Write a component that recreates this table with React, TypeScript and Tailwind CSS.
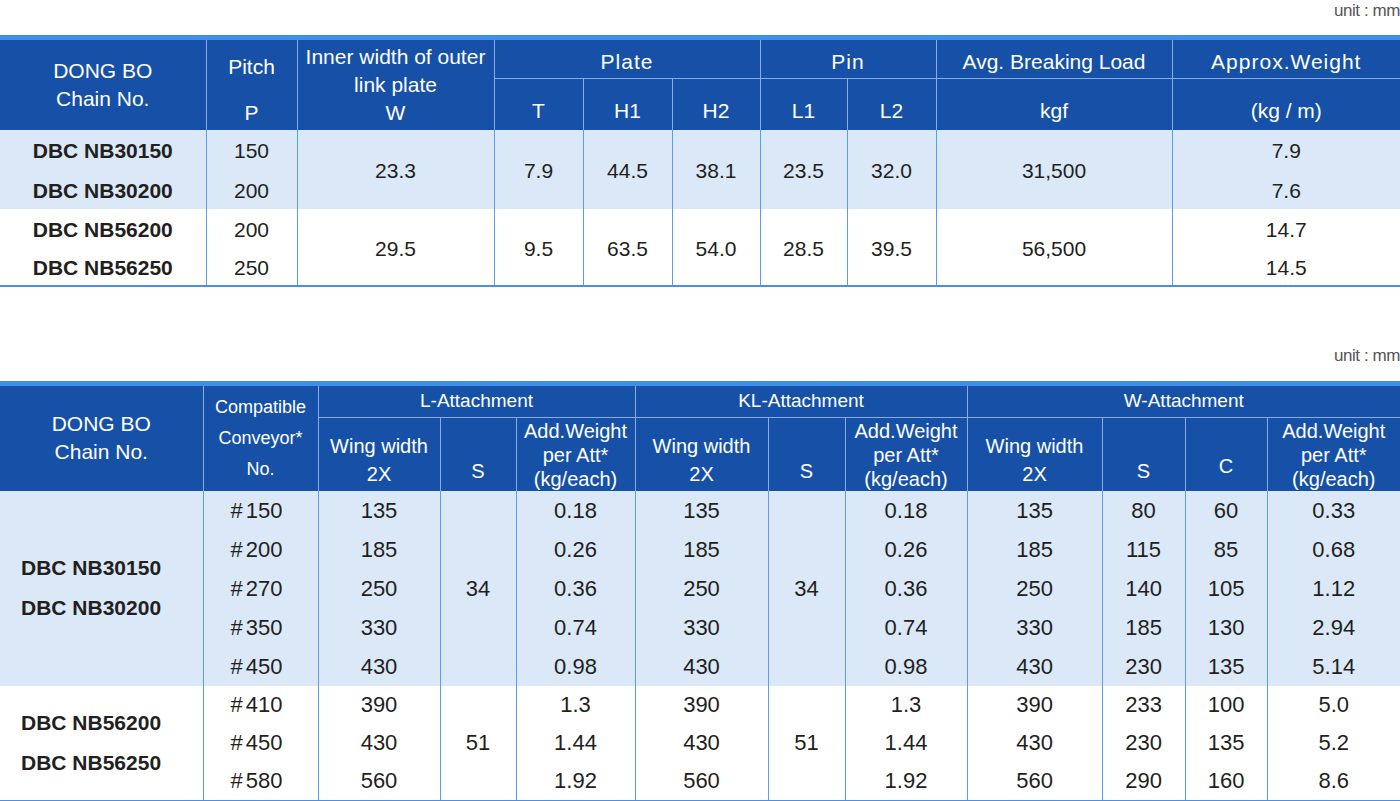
import React from 'react';

const topRows = [
  { group: 0, h: 'h-[39px]', name: 'DBC NB30150', pitch: '150', weight: '7.9' },
  { group: 0, h: 'h-[40px]', name: 'DBC NB30200', pitch: '200', weight: '7.6' },
  { group: 1, h: 'h-[38px]', name: 'DBC NB56200', pitch: '200', weight: '14.7' },
  { group: 1, h: 'h-[38px]', name: 'DBC NB56250', pitch: '250', weight: '14.5' },
];

const topGroups = [
  { w: '23.3', t: '7.9', h1: '44.5', h2: '38.1', l1: '23.5', l2: '32.0', load: '31,500' },
  { w: '29.5', t: '9.5', h1: '63.5', h2: '54.0', l1: '28.5', l2: '39.5', load: '56,500' },
];

const attGroups = [
  {
    names: ['DBC NB30150', 'DBC NB30200'],
    s: '34',
    ks: '34',
    bg: 'bg-[#dae8f8]',
    h: 'h-[39px]',
    rows: [
      ['150', '135', '0.18', '135', '0.18', '135', '80', '60', '0.33'],
      ['200', '185', '0.26', '185', '0.26', '185', '115', '85', '0.68'],
      ['270', '250', '0.36', '250', '0.36', '250', '140', '105', '1.12'],
      ['350', '330', '0.74', '330', '0.74', '330', '185', '130', '2.94'],
      ['450', '430', '0.98', '430', '0.98', '430', '230', '135', '5.14'],
    ],
  },
  {
    names: ['DBC NB56200', 'DBC NB56250'],
    s: '51',
    ks: '51',
    bg: 'bg-white',
    h: 'h-[38px]',
    rows: [
      ['410', '390', '1.3', '390', '1.3', '390', '233', '100', '5.0'],
      ['450', '430', '1.44', '430', '1.44', '430', '230', '135', '5.2'],
      ['580', '560', '1.92', '560', '1.92', '560', '290', '160', '8.6'],
    ],
  },
];

const th = 'border-l border-[#86ace2] font-normal text-center';
const td = 'border-l border-[#5c9de8] text-center align-middle';

const Unit: React.FC<{ className?: string }> = ({ className }) => (
  <div className={`flex justify-end ${className ?? ''}`}>
    <span className="text-[17px] leading-[22px] text-[#555555] tracking-tight">unit : mm</span>
  </div>
);

const ChainTable: React.FC = () => (
  <div className="border-t-[5px] border-b-2 border-t-[#3f8fe8] border-b-[#4a90e2]">
    <table className="w-[1400px] table-fixed border-collapse">
      <colgroup>
        <col className="w-[206px]" />
        <col className="w-[91px]" />
        <col className="w-[197px]" />
        <col className="w-[89px]" />
        <col className="w-[89px]" />
        <col className="w-[88px]" />
        <col className="w-[87px]" />
        <col className="w-[89px]" />
        <col className="w-[236px]" />
        <col className="w-[228px]" />
      </colgroup>
      <thead className="bg-[#1651a7] text-white text-[21px]">
        <tr className="h-[38px]">
          <th rowSpan={2} className="font-normal text-center align-middle leading-[28px]">
            DONG BO<br />Chain No.
          </th>
          <th rowSpan={2} className={`${th} align-top pt-[13px] leading-[28px]`}>
            <div>Pitch</div>
            <div className="mt-[18px]">P</div>
          </th>
          <th rowSpan={2} className={`${th} align-top pt-[3px] leading-[28px]`}>
            Inner width of outer<br />link plate<br />W
          </th>
          <th colSpan={3} className={`${th} align-top pt-[6px] leading-[32px] tracking-[1px]`}>Plate</th>
          <th colSpan={2} className={`${th} align-top pt-[6px] leading-[32px] tracking-[1px]`}>Pin</th>
          <th className={`${th} align-top pt-[6px] leading-[32px]`}>Avg. Breaking Load</th>
          <th className={`${th} align-top pt-[6px] leading-[32px] tracking-[1px]`}>Approx.Weight</th>
        </tr>
        <tr className="h-[51px]">
          {['T', 'H1', 'H2', 'L1', 'L2', 'kgf', '(kg / m)'].map((c) => (
            <th key={c} className={`${th} border-t align-top pt-[16px] leading-[32px]`}>
              {c}
            </th>
          ))}
        </tr>
      </thead>
      <tbody className="text-[21px] text-[#231f20]">
        {topRows.map((r, i) => {
          const g = topGroups[r.group];
          const first = i % 2 === 0;
          return (
            <tr key={r.name} className={`${r.h} ${r.group === 0 ? 'bg-[#dae8f8]' : 'bg-white'}`}>
              <td className="text-center align-middle pt-1 font-bold leading-[24px]">{r.name}</td>
              <td className={`${td} pt-1 leading-[24px]`}>{r.pitch}</td>
              {first && (
                <>
                  <td rowSpan={2} className={`${td} pt-1`}>{g.w}</td>
                  <td rowSpan={2} className={`${td} pt-1`}>{g.t}</td>
                  <td rowSpan={2} className={`${td} pt-1`}>{g.h1}</td>
                  <td rowSpan={2} className={`${td} pt-1`}>{g.h2}</td>
                  <td rowSpan={2} className={`${td} pt-1`}>{g.l1}</td>
                  <td rowSpan={2} className={`${td} pt-1`}>{g.l2}</td>
                  <td rowSpan={2} className={`${td} pt-1`}>{g.load}</td>
                </>
              )}
              <td className={`${td} pt-1 leading-[24px]`}>{r.weight}</td>
            </tr>
          );
        })}
      </tbody>
    </table>
  </div>
);

const AttachmentTable: React.FC = () => (
  <div className="border-t-[5px] border-b-2 border-t-[#3f8fe8] border-b-[#4a90e2]">
    <table className="w-[1400px] table-fixed border-collapse">
      <colgroup>
        <col className="w-[203px]" />
        <col className="w-[115px]" />
        <col className="w-[122px]" />
        <col className="w-[76px]" />
        <col className="w-[119px]" />
        <col className="w-[133px]" />
        <col className="w-[77px]" />
        <col className="w-[122px]" />
        <col className="w-[135px]" />
        <col className="w-[83px]" />
        <col className="w-[82px]" />
        <col className="w-[133px]" />
      </colgroup>
      <thead className="bg-[#1651a7] text-white">
        <tr className="h-[32px]">
          <th rowSpan={2} className="font-normal text-center align-middle text-[21px] leading-[28px]">
            DONG BO<br />Chain No.
          </th>
          <th rowSpan={2} className={`${th} align-middle text-[18px] leading-[31px]`}>
            Compatible<br />Conveyor*<br />No.
          </th>
          <th colSpan={3} className={`${th} align-middle text-[19px] leading-[30px]`}>L-Attachment</th>
          <th colSpan={3} className={`${th} align-middle text-[19px] leading-[30px]`}>KL-Attachment</th>
          <th colSpan={4} className={`${th} align-middle text-[19px] leading-[30px]`}>W-Attachment</th>
        </tr>
        <tr className="h-[73px]">
          {[0, 1, 2].map((k) => (
            <React.Fragment key={k}>
              <th className={`${th} border-t align-bottom pb-[3px] text-[20px] leading-[28px]`}>
                Wing width<br />2X
              </th>
              <th className={`${th} border-t align-bottom pb-[7px] text-[20px] leading-[26px]`}>S</th>
              {k === 2 && (
                <th className={`${th} border-t align-bottom pb-[12px] text-[20px] leading-[26px]`}>C</th>
              )}
              <th className={`${th} border-t align-bottom text-[20px] leading-[24px]`}>
                Add.Weight<br />per Att*<br />(kg/each)
              </th>
            </React.Fragment>
          ))}
        </tr>
      </thead>
      <tbody className="text-[22px] text-[#231f20]">
        {attGroups.map((g) =>
          g.rows.map((r, i) => (
            <tr key={`${g.s}-${i}`} className={`${g.h} ${g.bg}`}>
              {i === 0 && (
                <td rowSpan={g.rows.length} className="text-left align-middle pl-[21px] font-bold text-[21px] leading-[40px]">
                  {g.names[0]}<br />{g.names[1]}
                </td>
              )}
              <td className={`${td} pr-2`}>
                <span className="mr-[3px]">#</span>{r[0]}
              </td>
              <td className={td}>{r[1]}</td>
              {i === 0 && <td rowSpan={g.rows.length} className={td}>{g.s}</td>}
              <td className={td}>{r[2]}</td>
              <td className={td}>{r[3]}</td>
              {i === 0 && <td rowSpan={g.rows.length} className={td}>{g.ks}</td>}
              <td className={td}>{r[4]}</td>
              <td className={td}>{r[5]}</td>
              <td className={td}>{r[6]}</td>
              <td className={td}>{r[7]}</td>
              <td className={td}>{r[8]}</td>
            </tr>
          ))
        )}
      </tbody>
    </table>
  </div>
);

export default function App() {
  return (
    <div className="w-[1400px] h-[801px] overflow-hidden bg-white font-['Liberation_Sans',Arial,sans-serif]">
      <Unit className="h-[35px]" />
      <ChainTable />
      <Unit className="h-[94px] items-start pt-[58px]" />
      <AttachmentTable />
    </div>
  );
}
